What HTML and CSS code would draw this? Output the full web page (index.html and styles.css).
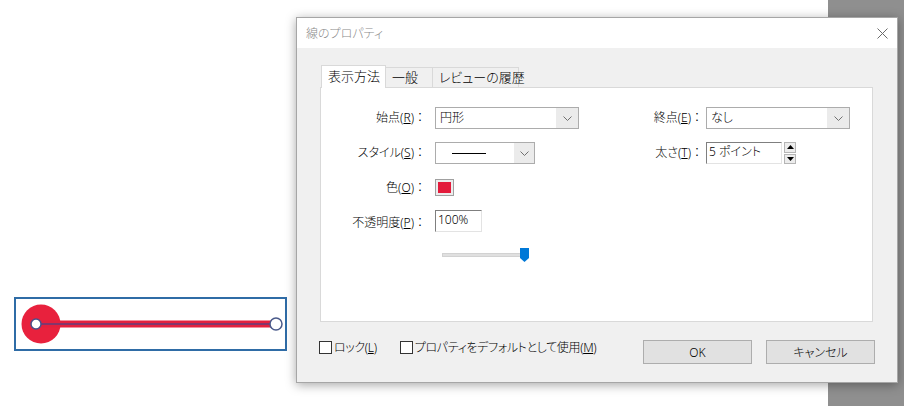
FILE: index.html
```html
<!DOCTYPE html>
<html lang="ja">
<head>
<meta charset="utf-8">
<title>線のプロパティ</title>
<link rel="stylesheet" href="styles.css">
</head>
<body>
<div class="desktop">
  <div class="document">
    <div class="annotation">
      <svg width="269" height="50" viewBox="0 0 269 50">
        <circle cx="25" cy="25" r="19.5" fill="#e8213d"/>
        <line x1="25" y1="25" x2="260" y2="25" stroke="#e3203e" stroke-width="7"/>
        <line x1="20" y1="25" x2="260" y2="25" stroke="#5a3f80" stroke-width="2.2" opacity="0.7"/>
        <circle cx="20" cy="25" r="5" fill="#fff" stroke="#4a4f8a" stroke-width="1.5"/>
        <circle cx="260" cy="25" r="6" fill="#fff" stroke="#4a5a8a" stroke-width="1.5"/>
      </svg>
    </div>
  </div>
  <div class="gutter"></div>

  <div class="dialog">
    <div class="titlebar">
      <span class="title">線のプロパティ</span>
      <svg class="close" width="11" height="11" viewBox="0 0 11 11"><path d="M0.5 0.5 L10.5 10.5 M10.5 0.5 L0.5 10.5" stroke="#6b6b6b" stroke-width="1" fill="none"/></svg>
    </div>
    <div class="dlg-body">
      <div class="tabs">
        <div class="tab active t1">表示方法</div>
        <div class="tab t2">一般</div>
        <div class="tab t3">レビューの履歴</div>
      </div>
      <div class="panel">
        <div class="form">
          <div class="lbl">始点(<u>R</u>)<span class="colon">：</span></div>
          <div class="select w144">
            <span class="val">円形</span>
            <span class="arrow"><svg width="9" height="5" viewBox="0 0 9 5"><polyline points="0.5,0.5 4.5,4.5 8.5,0.5" fill="none" stroke="#707070" stroke-width="1"/></svg></span>
          </div>
          <div class="lbl r">終点(<u>E</u>)<span class="colon">：</span></div>
          <div class="select w144">
            <span class="val">なし</span>
            <span class="arrow"><svg width="9" height="5" viewBox="0 0 9 5"><polyline points="0.5,0.5 4.5,4.5 8.5,0.5" fill="none" stroke="#707070" stroke-width="1"/></svg></span>
          </div>

          <div class="lbl">スタイル(<u>S</u>)<span class="colon">：</span></div>
          <div class="select w100">
            <span class="val line-val"><span class="dash"></span></span>
            <span class="arrow narrow"><svg width="9" height="5" viewBox="0 0 9 5"><polyline points="0.5,0.5 4.5,4.5 8.5,0.5" fill="none" stroke="#707070" stroke-width="1"/></svg></span>
          </div>
          <div class="lbl r">太さ(<u>T</u>)<span class="colon">：</span></div>
          <div class="spin-field">
            <div class="textbox w76">5 ポイント</div>
            <div class="spinner">
              <span class="spin-btn"><svg width="7" height="4" viewBox="0 0 7 4"><polygon points="0,4 7,4 3.5,0" fill="#000"/></svg></span>
              <span class="spin-btn"><svg width="7" height="4" viewBox="0 0 7 4"><polygon points="0,0 7,0 3.5,4" fill="#000"/></svg></span>
            </div>
          </div>

          <div class="lbl c">色(<u>O</u>)<span class="colon">：</span></div>
          <div class="swatch"><span class="swatch-color"></span></div>
          <div></div>
          <div></div>

          <div class="lbl o">不透明度(<u>P</u>)<span class="colon">：</span></div>
          <div class="textbox w47">100%</div>
          <div></div>
          <div></div>

          <div></div>
          <div class="slider">
            <span class="track"></span>
            <svg class="thumb" width="9" height="14" viewBox="0 0 9 14"><path d="M0 0 H9 V10 L4.5 14 L0 10 Z" fill="#0078d7"/></svg>
          </div>
        </div>
      </div>
      <div class="footer">
        <div class="check first"><span class="box"></span>ロック(<u>L</u>)</div>
        <div class="check"><span class="box"></span>プロパティをデフォルトとして使用(<u>M</u>)</div>
        <div class="buttons">
          <button class="btn" type="button">OK</button>
          <button class="btn" type="button">キャンセル</button>
        </div>
      </div>
    </div>
  </div>
</div>
</body>
</html>
```
FILE: styles.css
```css
* { box-sizing: border-box; }
html, body { margin: 0; padding: 0; }
body {
  width: 904px;
  height: 406px;
  overflow: hidden;
  font-family: "Noto Sans", "Noto Sans CJK JP", sans-serif;
  font-size: 12px;
  font-weight: 300;
  color: #000;
  font-feature-settings: "palt";
}
u { text-underline-offset: 1px; }

.desktop { position: relative; display: flex; width: 904px; height: 406px; }
.document { flex: 1; background: #fff; position: relative; }
.gutter { width: 76px; background: #8f8f8f; }

.annotation {
  position: absolute;
  left: 14px;
  top: 297px;
  width: 273px;
  height: 54px;
  border: 2px solid #2f6ca6;
  background: #fff;
}
.annotation svg { display: block; }

.dialog {
  position: absolute;
  left: 296px;
  top: 17px;
  width: 602px;
  height: 366px;
  border: 1px solid #a6a6a6;
  background: #f0f0f0;
  box-shadow: 0 2px 10px rgba(0,0,0,0.35);
  display: flex;
  flex-direction: column;
}
.titlebar {
  height: 30px;
  background: #fff;
  display: flex;
  align-items: center;
  padding: 0 9px;
}
.title { color: #8a8a8a; font-size: 12px; }
.close { margin-left: auto; display: block; }

.dlg-body {
  flex: 1;
  padding: 17px 24px 0 23px;
  display: flex;
  flex-direction: column;
}
.tabs {
  display: flex;
  align-items: flex-end;
  height: 22px;
  margin-left: 1px;
  position: relative;
  z-index: 1;
}
.tab {
  height: 20px;
  padding-left: 6px;
  border: 1px solid #d9d9d9;
  border-bottom: none;
  background: #f0f0f0;
  font-size: 13px;
  line-height: 18px;
  white-space: nowrap;
}
.tab + .tab { border-left: none; }
.tab.active {
  height: 23px;
  margin-bottom: -1px;
  background: #fff;
  line-height: 21px;
}
.t1 { width: 65px; }
.t2 { width: 47px; }
.t3 { width: 86px; }

.panel {
  height: 235px;
  background: #fff;
  border: 1px solid #d9d9d9;
}
.form {
  display: grid;
  grid-template-columns: 114px 157px 114px 1fr;
  grid-template-rows: 35px 37px 31px 38px 14px;
  padding-top: 19px;
  align-items: start;
}
.lbl {
  text-align: right;
  padding-right: 9px;
  line-height: 22px;
  white-space: nowrap;
}
.lbl.r { padding-right: 3px; }
.lbl.c { line-height: 17px; }
.lbl.o { padding-top: 2px; }
.colon { display: inline-block; width: 12px; text-align: center; }

.select {
  display: flex;
  height: 22px;
  border: 1px solid #acacac;
  background: #fff;
}
.w144 { width: 144px; }
.w100 { width: 100px; }
.select .val { flex: 1; padding-left: 4px; line-height: 20px; }
.select .arrow {
  width: 22px;
  background: #ebebeb;
  display: flex;
  align-items: center;
  justify-content: center;
}
.select .arrow.narrow { width: 20px; }
.line-val { display: flex; align-items: center; padding-left: 16px !important; }
.dash { display: block; width: 34px; height: 1px; background: #000; }

.textbox {
  height: 22px;
  border: 1px solid;
  border-color: #7f7f7f #e3e3e3 #e3e3e3 #7f7f7f;
  background: #fff;
  padding-left: 2px;
  line-height: 18px;
  white-space: nowrap;
}
.w76 { width: 76px; }
.w47 { width: 47px; }

.spin-field { display: flex; align-items: flex-start; }
.spinner {
  display: flex;
  flex-direction: column;
  gap: 1px;
  margin-left: 2px;
  width: 12px;
  height: 22px;
}
.spin-btn {
  flex: 1;
  border: 1px solid #b5b5b5;
  background: #ececec;
  display: flex;
  align-items: center;
  justify-content: center;
}
.spin-btn svg { display: block; }

.swatch {
  width: 19px;
  height: 17px;
  border: 1px solid #a0a0a0;
  background: #ececec;
  padding: 2px;
}
.swatch-color { display: block; width: 100%; height: 100%; background: #e31b3b; }

.slider {
  display: flex;
  align-items: center;
  height: 14px;
  margin-left: 7px;
}
.track { display: block; width: 83px; height: 4px; background: #e0e0e0; border: 1px solid #d2d2d2; }
.thumb { display: block; margin-left: -5px; }

.footer {
  display: flex;
  align-items: flex-start;
  margin-top: 18px;
}
.check {
  display: flex;
  align-items: center;
  margin-top: 1px;
  line-height: 13px;
  margin-right: 23px;
  white-space: nowrap;
  letter-spacing: -0.35px;
}
.check.first { margin-left: -1px; }
.check .box {
  width: 13px;
  height: 13px;
  border: 1px solid #333;
  background: #fff;
  margin-right: 2px;
}
.buttons {
  margin-left: auto;
  display: flex;
  gap: 14px;
  margin-right: -2px;
}
.btn {
  width: 109px;
  height: 24px;
  border: 1px solid #adadad;
  background: #e1e1e1;
  font-family: inherit;
  font-size: 12px;
  font-weight: 300;
  color: #000;
  padding: 0;
  font-feature-settings: "palt";
}
```
